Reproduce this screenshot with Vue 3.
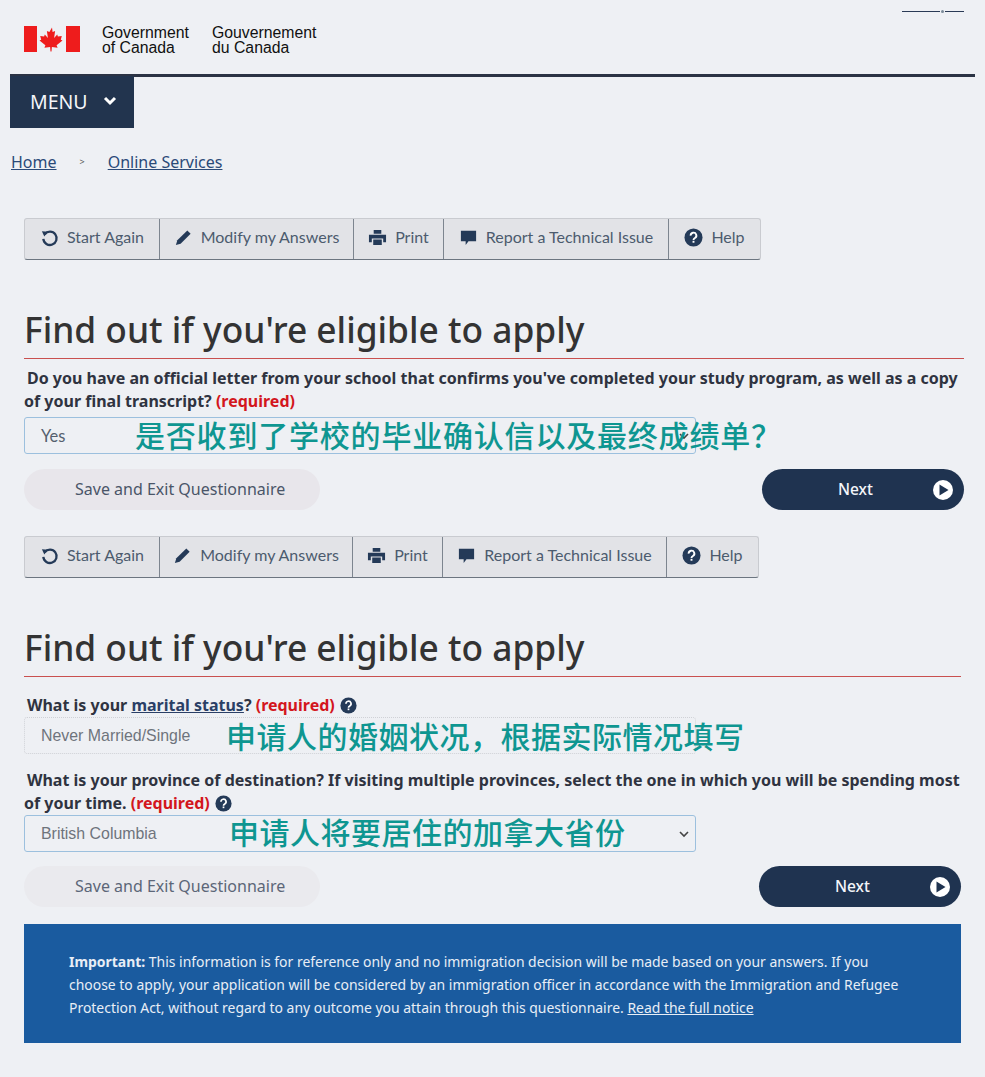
<script setup>
const widths = [
  [135, 194, 90, 225, 91],
  [135, 193, 90, 224, 91],
]
const labels = ['Start Again', 'Modify my Answers', 'Print', 'Report a Technical Issue', 'Help']
const icons = ['again', 'pencil', 'print', 'comment', 'help']
function tools(i) {
  return labels.map((label, n) => ({ label, icon: icons[n], width: widths[i][n] }))
}
</script>

<template>
  <div class="page">
    <header class="fip">
      <svg class="flag" viewBox="0 0 56 26" aria-hidden="true">
        <rect x="0" y="0" width="13" height="26" fill="#ee1c1c" />
        <rect x="42" y="0" width="14" height="26" fill="#ee1c1c" />
        <path fill="#ee1c1c" d="M28 1.500l-2.600 4.600-2.500-1 1 6.800-3.100-3.300-.7 1.900-3.900-.6 1 3.800-1.700.9 5.900 4.600-1 2.500 5.700-.8.400 4.600h1l.4-4.600 5.700.8-1-2.500 5.900-4.600-1.700-.9 1-3.800-3.900.6-.7-1.900-3.100 3.300 1-6.800-2.500 1z" />
      </svg>
      <div class="sig sig-en">Government<br />of Canada</div>
      <div class="sig">Gouvernement<br />du Canada</div>
      <div class="corner"><i></i><b></b><i></i></div>
    </header>

    <div class="rule"></div>
    <button class="menu">
      MENU
      <svg width="14" height="10" viewBox="0 0 14 10"><path d="M2 2l5 5 5-5" fill="none" stroke="#fff" stroke-width="3" /></svg>
    </button>

    <nav class="crumbs">
      <a>Home</a><span class="sep">&gt;</span><a>Online Services</a>
    </nav>

    <section class="sec first">
      <div class="toolbar">
        <div v-for="t in tools(0)" :key="t.label" class="tool" :style="{ width: t.width + 'px' }">
          <svg class="ico" viewBox="0 0 20 20">
            <template v-if="t.icon === 'again'"><path d="M5 6.500a7 7 0 1 1-1.500 5" fill="none" stroke="#243a58" stroke-width="2.400" /><path d="M2 3.500l6.500.5-4 5z" fill="#243a58" /></template>
            <path v-else-if="t.icon === 'pencil'" d="M14 2.500l3.500 3.500L7 16.500l-5 1.500 1.500-5z" fill="#243a58" />
            <path v-else-if="t.icon === 'print'" fill="#243a58" d="M6 2h8v4H6zM1 7h18v8h-3v-4H4v4H1zM5.500 12h9v6h-9z" />
            <path v-else-if="t.icon === 'comment'" fill="#243a58" d="M2 3h16v11h-8l-3 4v-4H2z" />
            <template v-else><circle cx="10" cy="10" r="9.500" fill="#243a58" /><path d="M7 8a3 3 0 1 1 4.500 2.500c-1 .6-1.500 1-1.500 2" fill="none" stroke="#fff" stroke-width="2" /><rect x="9" y="13.500" width="2" height="2" fill="#fff" /></template>
          </svg>
          <span>{{ t.label }}</span>
        </div>
      </div>

      <h1>Find out if you're eligible to apply</h1>

      <p class="q q-letter">Do you have an official letter from your school that confirms you've completed your study program, as well as a copy of your final transcript? <span class="req">(required)</span></p>
      <div class="field">
        <span class="val">Yes</span>
        <svg class="chev" width="10" height="8" viewBox="0 0 10 8"><path d="M1 2l4 4 4-4" fill="none" stroke="#444" stroke-width="1.600" /></svg>
        <span class="note note-1">是否收到了学校的毕业确认信以及最终成绩单？</span>
      </div>

      <div class="actions">
        <div class="save">Save and Exit Questionnaire</div>
        <div class="next">
          <span>Next</span>
          <svg width="22" height="22" viewBox="0 0 22 22"><circle cx="11" cy="11" r="10" fill="#fff" /><path d="M7.500 5.500l9 5.500-9 5.500z" fill="#1f3350" /></svg>
        </div>
      </div>
    </section>

    <section class="sec second">
      <div class="toolbar">
        <div v-for="t in tools(1)" :key="t.label" class="tool" :style="{ width: t.width + 'px' }">
          <svg class="ico" viewBox="0 0 20 20">
            <template v-if="t.icon === 'again'"><path d="M5 6.500a7 7 0 1 1-1.500 5" fill="none" stroke="#243a58" stroke-width="2.400" /><path d="M2 3.500l6.500.5-4 5z" fill="#243a58" /></template>
            <path v-else-if="t.icon === 'pencil'" d="M14 2.500l3.500 3.500L7 16.500l-5 1.500 1.500-5z" fill="#243a58" />
            <path v-else-if="t.icon === 'print'" fill="#243a58" d="M6 2h8v4H6zM1 7h18v8h-3v-4H4v4H1zM5.500 12h9v6h-9z" />
            <path v-else-if="t.icon === 'comment'" fill="#243a58" d="M2 3h16v11h-8l-3 4v-4H2z" />
            <template v-else><circle cx="10" cy="10" r="9.500" fill="#243a58" /><path d="M7 8a3 3 0 1 1 4.500 2.500c-1 .6-1.500 1-1.500 2" fill="none" stroke="#fff" stroke-width="2" /><rect x="9" y="13.500" width="2" height="2" fill="#fff" /></template>
          </svg>
          <span>{{ t.label }}</span>
        </div>
      </div>

      <h1>Find out if you're eligible to apply</h1>

      <p class="q q-marital">What is your <a class="term">marital status</a>? <span class="req">(required)</span>
        <svg class="qi" viewBox="0 0 20 20"><circle cx="10" cy="10" r="9.500" fill="#243a58" /><path d="M7 8a3 3 0 1 1 4.500 2.500c-1 .6-1.500 1-1.500 2" fill="none" stroke="#fff" stroke-width="2" /><rect x="9" y="13.500" width="2" height="2" fill="#fff" /></svg>
      </p>
      <div class="field disabled">
        <span class="val arial">Never Married/Single</span>
        <span class="note note-2">申请人的婚姻状况，根据实际情况填写</span>
      </div>

      <p class="q q-province">What is your province of destination? If visiting multiple provinces, select the one in which you will be spending most of your time. <span class="req">(required)</span>
        <svg class="qi" viewBox="0 0 20 20"><circle cx="10" cy="10" r="9.500" fill="#243a58" /><path d="M7 8a3 3 0 1 1 4.500 2.500c-1 .6-1.500 1-1.500 2" fill="none" stroke="#fff" stroke-width="2" /><rect x="9" y="13.500" width="2" height="2" fill="#fff" /></svg>
      </p>
      <div class="field">
        <span class="val arial">British Columbia</span>
        <svg class="chev" width="10" height="8" viewBox="0 0 10 8"><path d="M1 2l4 4 4-4" fill="none" stroke="#444" stroke-width="1.600" /></svg>
        <span class="note note-3">申请人将要居住的加拿大省份</span>
      </div>

      <div class="actions tight">
        <div class="save faint">Save and Exit Questionnaire</div>
        <div class="next">
          <span>Next</span>
          <svg width="22" height="22" viewBox="0 0 22 22"><circle cx="11" cy="11" r="10" fill="#fff" /><path d="M7.500 5.500l9 5.500-9 5.500z" fill="#1f3350" /></svg>
        </div>
      </div>

      <div class="notice">
        <strong>Important:</strong> This information is for reference only and no immigration decision will be made based on your answers. If you choose to apply, your application will be considered by an immigration officer in accordance with the Immigration and Refugee Protection Act, without regard to any outcome you attain through this questionnaire. <a>Read the full notice</a>
      </div>
    </section>
  </div>
</template>

<style>
html, body { margin: 0; background: #eef0f4; }
</style>

<style scoped>
.page {
  width: 985px;
  height: 1077px;
  overflow: hidden;
  position: relative;
  background: #eef0f4;
  font-family: "Noto Sans", "Open Sans", sans-serif;
  color: #333;
}
.fip {
  height: 74px;
  padding-left: 24px;
  display: flex;
  align-items: flex-start;
  box-sizing: border-box;
}
.flag { width: 56px; height: 26px; margin-top: 26px; margin-right: 22px; flex: none; }
.sig {
  font: 15.800px/15px "Liberation Sans", Arial, sans-serif;
  color: #111;
  margin-top: 25px;
}
.sig-en { width: 110px; }
.corner {
  position: absolute;
  top: 10px;
  left: 902px;
  width: 62px;
  display: flex;
  align-items: center;
  gap: 1px;
}
.corner i { height: 1px; background: #2a3a55; flex: 1; }
.corner i:first-child { flex: 2; }
.corner b { width: 3px; height: 3px; background: #7a8a99; border-radius: 50%; }
.rule { height: 2.500px; margin: 0 10px; background: #2b3344; }
.menu {
  display: flex;
  align-items: center;
  gap: 15px;
  width: 124px;
  height: 52px;
  margin: -0.5px 0 0 10px;
  padding: 0 0 2px 20px;
  box-sizing: border-box;
  border: 0;
  background: #22344e;
  color: #f4f6fa;
  font: 400 19.500px "Noto Sans", sans-serif;
}
.crumbs {
  height: 22px;
  margin: 23px 0 0 11px;
  font: 16px/22px "Noto Sans", sans-serif;
  color: #2a4a78;
  display: flex;
}
.crumbs a { text-decoration: underline; }
.sep { font-size: 9px; margin: 0 23px; color: #555; }
.sec { margin-left: 24px; }
.first { width: 940px; margin-top: 45px; }
.second { width: 937px; margin-top: 26px; }
.toolbar {
  display: inline-flex;
  height: 42px;
  background: #e2e3e7;
  border: 1px solid #c9cbd0;
  border-bottom: 1px solid #6c7580;
  border-radius: 3px;
  box-sizing: border-box;
  vertical-align: top;
}
.tool {
  display: flex;
  align-items: center;
  justify-content: center;
  gap: 8px;
  padding-bottom: 5px;
  box-sizing: border-box;
  border-right: 1px solid #7d858f;
  font: 16px "Lato", sans-serif;
  color: #4c5b6e;
  white-space: nowrap;
}
.tool:last-child { border-right: 0; }
.ico { width: 19px; height: 19px; flex: none; margin-top: 2px; }
h1 {
  margin: 0;
  padding-top: 48px;
  height: 99px;
  box-sizing: border-box;
  border-bottom: 1px solid #c9504f;
  font: 500 35.300px/42px "Noto Sans", sans-serif;
  color: #333;
}
.q {
  font: 700 16px/23px "Noto Sans", sans-serif;
  color: #2f3340;
  text-indent: 3px;
}
.q-letter { margin: 8px 0 4px; }
.q-marital { margin: 17px 0 0; }
.q-province { margin: 15px 0 0; }
.req { color: #d3161d; }
.term { color: #2a3f66; text-decoration: underline; }
.qi { width: 17px; height: 17px; vertical-align: -3px; margin-left: 5px; }
.field {
  position: relative;
  width: 672px;
  height: 37px;
  box-sizing: border-box;
  border: 1px solid #9cc0de;
  border-radius: 3px;
  display: flex;
  align-items: center;
  padding-left: 16px;
}
.disabled { border: 1px dotted #cfd1d6; }
.val { font: 16.500px "Lato", sans-serif; color: #55606e; }
.arial { font-family: "Liberation Sans", Arial, sans-serif; font-size: 15.900px; color: #6e747c; }
.chev { position: absolute; right: 6px; top: 14px; }
.note {
  position: absolute;
  font: 500 30px/40px "Noto Sans CJK SC", sans-serif;
  color: #0e9691;
  white-space: nowrap;
  letter-spacing: 0.500px;
}
.note-1 { left: 110px; top: -4px; letter-spacing: 0.800px; }
.note-2 { left: 201px; top: -3px; }
.note-3 { left: 204px; top: -5px; }
.actions {
  display: flex;
  justify-content: space-between;
  margin-top: 15px;
}
.tight { margin-top: 14px; }
.save {
  width: 296px;
  height: 41px;
  box-sizing: border-box;
  padding-left: 51px;
  border-radius: 21px;
  background: #e8e6eb;
  font: 16px/40px "Noto Sans", sans-serif;
  color: #4a5568;
}
.faint { background: #eaeaee; color: #5c6678; }
.next {
  width: 202px;
  height: 41px;
  box-sizing: border-box;
  border-radius: 21px;
  background: #1f3350;
  color: #f4f6fa;
  font: 500 15.500px/41px "Noto Sans", sans-serif;
  display: flex;
  align-items: center;
  padding-left: 76px;
  justify-content: space-between;
  padding-right: 10px;
}
.notice {
  margin-top: 17px;
  height: 119px;
  box-sizing: border-box;
  padding: 26px 45px 0;
  background: #1a5b9f;
  color: #e8eef6;
  font: 13.950px/23px "Noto Sans", sans-serif;
}
.notice a { text-decoration: underline; }
</style>
